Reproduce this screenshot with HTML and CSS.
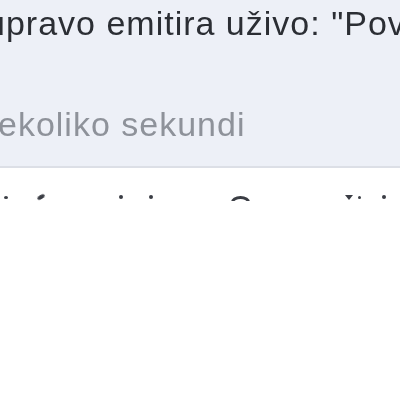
FILE: index.html
```html
<!DOCTYPE html>
<html>
<head>
  <title>Obavijest</title>
  <link rel="stylesheet" href="styles.css">
</head>
<body>
  <div class="notif">
    <div class="title">upravo emitira uživo: "Pov</div>
    <div class="time">ekoliko sekundi</div>
  </div>
  <div class="next">
    <span class="mark dot m1"></span>
    <span class="mark tick m2"></span>
    <span class="mark dot m3"></span>
    <span class="mark dot m4"></span>
    <span class="mark arc m5"></span>
    <span class="mark caron m6"></span>
    <span class="mark dot small m7"></span>
    <span class="mark dot m8"></span>
  </div>
</body>
</html>
```

FILE: styles.css
```css
body {
  margin: 0;
  padding: 0;
  background-color: #fff;
  font-family: "Liberation Sans", Arial, sans-serif;
}

.notif {
  height: 166px;
  background-color: #edf0f7;
  border-bottom: 2px solid #dcdfe6;
  overflow: hidden;
  white-space: nowrap;
}

.title {
  margin-left: -14px;
  padding-top: 1px;
  font-size: 34px;
  letter-spacing: 1px;
  line-height: 44px;
  color: #2b2e34;
  filter: blur(0.4px);
}

.time {
  margin-left: -2px;
  margin-top: 57px;
  font-size: 34px;
  letter-spacing: 1px;
  line-height: 44px;
  color: #8e929a;
  filter: blur(0.4px);
}

.next {
  display: flex;
  align-items: center;
  height: 8px;
  padding-top: 25px;
}

.mark {
  display: block;
  background-color: #3a3d44;
  filter: blur(0.6px);
}

.dot {
  width: 4px;
  height: 4px;
  border-radius: 50%;
}

.small {
  width: 3px;
  height: 3px;
}

.tick {
  width: 8px;
  height: 4px;
  border-radius: 50%;
  transform: rotate(-30deg);
}

.arc {
  box-sizing: border-box;
  width: 19px;
  height: 6px;
  background: none;
  border: 3px solid #3a3d44;
  border-bottom: none;
  border-radius: 50% 50% 0 0 / 100% 100% 0 0;
  margin-top: 3px;
}

.caron {
  width: 0;
  height: 0;
  background: none;
  border-left: 4px solid transparent;
  border-right: 4px solid transparent;
  border-top: 5px solid #3a3d44;
}

.m1 { margin-left: 4px; height: 3px; }
.m2 { margin-left: 29px; }
.m3 { margin-left: 74px; }
.m4 { margin-left: 26px; }
.m5 { margin-left: 78px; }
.m6 { margin-left: 95px; }
.m7 { margin-left: 5px; }
.m8 { margin-left: 21px; }
```
